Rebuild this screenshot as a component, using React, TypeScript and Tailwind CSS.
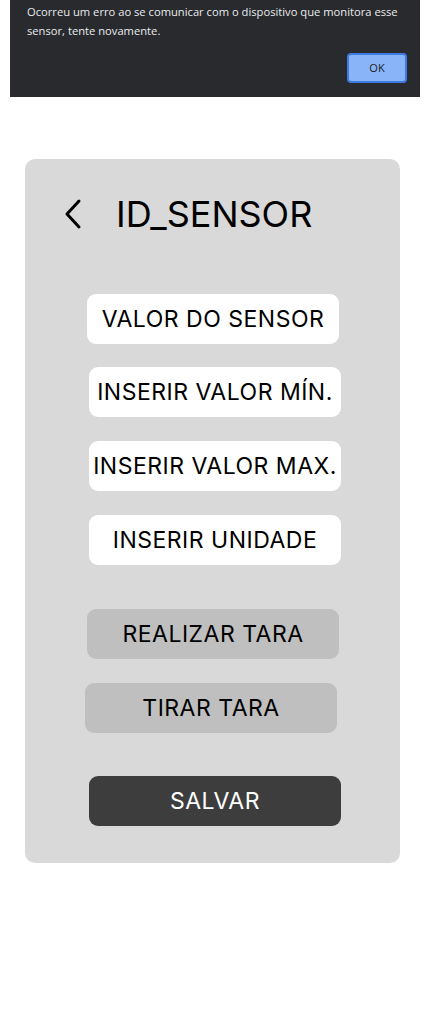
const fields = [
  { label: "VALOR DO SENSOR", shift: "ml-[62px]" },
  { label: "INSERIR VALOR MÍN.", shift: "ml-[64px] mt-[23px]" },
  { label: "INSERIR VALOR MAX.", shift: "ml-[64px] mt-[24px]" },
  { label: "INSERIR UNIDADE", shift: "ml-[64px] mt-[24px]" },
];

export default function App() {
  return (
    <div className="min-h-[1024px] w-[425px] bg-white" style={{ fontFamily: "Inter, 'Noto Sans', sans-serif" }}>
      {/* alert do navegador */}
      <div className="ml-[10px] h-[97px] w-[410px] bg-[#292a2d] pl-[17px] pr-[10px] pt-[2px]" style={{ fontFamily: "'Open Sans', 'Noto Sans', sans-serif" }}>
        <p className="text-[11.2px] leading-[19px] text-[#e8eaed]">
          Ocorreu um erro ao se comunicar com o dispositivo que monitora esse sensor, tente novamente.
        </p>
        <div className="mt-[13px] flex justify-end pr-[3px]">
          <button
            type="button"
            className="h-[30px] w-[60px] rounded-[4px] border-2 border-[#3c7be0] bg-[#8ab4f8] text-[11px] text-[#202124]"
          >
            OK
          </button>
        </div>
      </div>

      <div className="ml-[25px] mt-[62px] flex h-[704px] w-[375px] flex-col rounded-[10px] bg-[#d9d9d9]">
        <div className="mt-[40px] flex h-[30px] items-center">
          <svg className="ml-[37px]" width="22" height="32" viewBox="0 0 22 32" fill="none">
            <path d="M17 3 L5 16 L17 29" stroke="#000" strokeWidth="3" strokeLinecap="round" strokeLinejoin="round" />
          </svg>
          <h1 className="ml-[32px] text-[36px] font-normal leading-none text-black">ID_SENSOR</h1>
        </div>

        <div className="mt-[65px] flex flex-col">
          {fields.map((f) => (
            <button
              key={f.label}
              type="button"
              className={`${f.shift} flex h-[50px] w-[252px] items-center justify-center rounded-[9px] bg-white text-[23px] tracking-[0.5px] text-black`}
            >
              {f.label}
            </button>
          ))}

          <button
            type="button"
            className="ml-[62px] mt-[44px] flex h-[50px] w-[252px] items-center justify-center rounded-[9px] bg-[#bfbfbf] text-[23px] tracking-[0.5px] text-black"
          >
            REALIZAR TARA
          </button>
          <button
            type="button"
            className="ml-[60px] mt-[24px] flex h-[50px] w-[252px] items-center justify-center rounded-[9px] bg-[#bfbfbf] text-[23px] tracking-[0.5px] text-black"
          >
            TIRAR TARA
          </button>
          <button
            type="button"
            className="ml-[64px] mt-[43px] flex h-[50px] w-[252px] items-center justify-center rounded-[9px] bg-[#3d3d3d] text-[23px] tracking-[0.5px] text-white"
          >
            SALVAR
          </button>
        </div>
      </div>
    </div>
  );
}
